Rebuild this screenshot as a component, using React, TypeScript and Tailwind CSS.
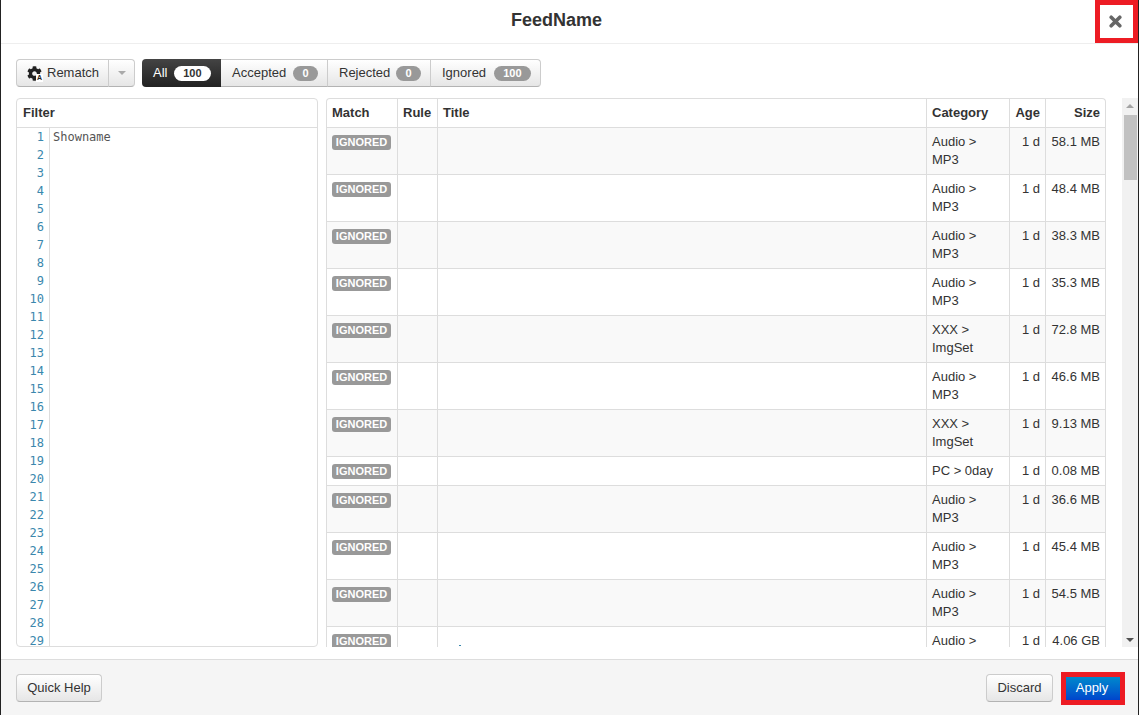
import { FaCog } from 'react-icons/fa';

type Row = { cat: string[]; size: string };

const rows: Row[] = [
  { cat: ['Audio >', 'MP3'], size: '58.1 MB' },
  { cat: ['Audio >', 'MP3'], size: '48.4 MB' },
  { cat: ['Audio >', 'MP3'], size: '38.3 MB' },
  { cat: ['Audio >', 'MP3'], size: '35.3 MB' },
  { cat: ['XXX >', 'ImgSet'], size: '72.8 MB' },
  { cat: ['Audio >', 'MP3'], size: '46.6 MB' },
  { cat: ['XXX >', 'ImgSet'], size: '9.13 MB' },
  { cat: ['PC > 0day'], size: '0.08 MB' },
  { cat: ['Audio >', 'MP3'], size: '36.6 MB' },
  { cat: ['Audio >', 'MP3'], size: '45.4 MB' },
  { cat: ['Audio >', 'MP3'], size: '54.5 MB' },
  { cat: ['Audio >', 'MP3'], size: '4.06 GB' },
];

const lineNumbers = Array.from({ length: 29 }, (_, i) => i + 1);

const btn =
  'bg-linear-to-b from-white to-[#e6e6e6] border border-[#cccccc] border-b-[#b3b3b3] text-[#333333]';

function Count({ value, light }: { value: number; light?: boolean }) {
  return (
    <span
      className={
        'inline-flex h-[15px] items-center rounded-full px-[9.5px] text-[11px] leading-none font-bold ' +
        (light ? 'bg-white text-[#333333]' : 'bg-[#999999] text-white')
      }
    >
      {value}
    </span>
  );
}

function Tab({ label, value, width }: { label: string; value: number; width: string }) {
  return (
    <button className={`${btn} ${width} flex h-[28px] items-center justify-between border-l-0 pr-[9px] pl-[11px] last:rounded-r-[4px]`}>
      {label}
      <Count value={value} />
    </button>
  );
}

export default function App() {
  return (
    <div className="relative flex h-[715px] w-full flex-col overflow-hidden border-x border-[#222222] bg-white font-['Liberation_Sans',Arial,sans-serif] text-[13px] leading-[18px] text-[#333333]">
      {/* Header */}
      <header className="flex h-[44px] shrink-0 items-center justify-center border-b border-[#eeeeee] pr-[26px] pb-[3px]">
        <h1 className="text-[18px] font-bold">FeedName</h1>
      </header>
      <div className="absolute top-0 right-0 flex h-[43px] w-[43px] items-center justify-center border-[5px] border-[#ed1c24] bg-white">
        <svg width="13" height="13" viewBox="0 0 13 13" className="mr-[2px] text-[#666666]">
          <path d="M2.2 2.2 L10.8 10.8 M10.8 2.2 L2.2 10.8" stroke="currentColor" strokeWidth="3.6" strokeLinecap="round" />
        </svg>
      </div>

      {/* Toolbar */}
      <div className="mt-[15px] flex h-[28px] shrink-0 gap-[7px] pl-[15px]">
        <div className="flex">
          <button className={`${btn} flex h-[28px] w-[93px] items-center gap-[5px] rounded-l-[4px] pl-[10px]`}>
            <span className="relative h-[15px] w-[15px] text-[#222222]">
              <FaCog size={15} />
              <span className="absolute -right-px -bottom-px bg-white px-px text-[7px] leading-[8px] font-bold">A</span>
            </span>
            Rematch
          </button>
          <button className={`${btn} -ml-px flex h-[28px] w-[27px] items-center justify-center rounded-r-[4px]`}>
            <span className="h-0 w-0 border-x-[4px] border-t-[4px] border-x-transparent border-t-[#aaaaaa]" />
          </button>
        </div>
        <div className="flex">
          <button className="flex h-[28px] w-[79px] items-center justify-between rounded-l-[4px] bg-linear-to-b from-[#444444] to-[#222222] pr-[10px] pl-[11px] text-white">
            All
            <Count value={100} light />
          </button>
          <Tab label="Accepted" value={0} width="w-[107px]" />
          <Tab label="Rejected" value={0} width="w-[103px]" />
          <Tab label="Ignored" value={100} width="w-[110px]" />
        </div>
      </div>

      {/* Body */}
      <div className="mt-[11px] flex h-[549px] shrink-0 pl-[15px]">
        <section className="flex w-[302px] flex-col overflow-hidden rounded-[4px] border border-[#dddddd]">
          <div className="h-[29px] shrink-0 border-b border-[#dddddd] pt-[5px] pl-[6px] font-bold">Filter</div>
          <div className="flex flex-1 overflow-hidden font-['DejaVu_Sans_Mono',monospace] text-[12px]">
            <div className="h-fit w-[33px] shrink-0 border-r border-[#dddddd] pr-[5px] text-right text-[#3a87ad]">
              {lineNumbers.map((n) => (
                <div key={n} className="h-[18px]">
                  {n}
                </div>
              ))}
            </div>
            <div className="pl-[3px] text-[#555555]">Showname</div>
          </div>
        </section>

        <section className="ml-[8px] w-[780px] overflow-hidden rounded-t-[4px] border-x border-t border-[#dddddd]">
          <table className="w-[778px] table-fixed border-separate border-spacing-0">
            <colgroup>
              <col className="w-[70px]" />
              <col className="w-[40px]" />
              <col className="w-[489px]" />
              <col className="w-[83px]" />
              <col className="w-[36px]" />
              <col className="w-[60px]" />
            </colgroup>
            <thead>
              <tr className="text-left font-bold">
                <th className="h-[28px] pt-[5px] pb-[5px] pl-[5px] align-top">Match</th>
                <th className="border-l border-[#dddddd] pt-[5px] pl-[5px] align-top">Rule</th>
                <th className="border-l border-[#dddddd] pt-[5px] pl-[5px] align-top">Title</th>
                <th className="border-l border-[#dddddd] pt-[5px] pl-[5px] align-top">Category</th>
                <th className="border-l border-[#dddddd] pt-[5px] pr-[5px] text-right align-top">Age</th>
                <th className="border-l border-[#dddddd] pt-[5px] pr-[5px] text-right align-top">Size</th>
              </tr>
            </thead>
            <tbody>
              {rows.map((r, i) => (
                <tr key={i} className={i % 2 === 0 ? 'bg-[#f9f9f9]' : 'bg-white'}>
                  <td className="border-t border-[#dddddd] pt-[4px] pb-[6px] pl-[5px] align-top">
                    <span className="mt-[3px] flex h-[15px] w-[59px] items-center justify-center rounded-[3px] bg-[#999999] text-[11px] leading-none font-bold text-white">
                      IGNORED
                    </span>
                  </td>
                  <td className="border-t border-l border-[#dddddd]" />
                  <td className="border-t border-l border-[#dddddd] align-top">
                    {i === 11 && <div className="mt-[18px] ml-[21px] h-px w-[2px] bg-[#3a87ad]" />}
                  </td>
                  <td className="border-t border-l border-[#dddddd] pt-[5px] pb-[5px] pl-[5px] align-top">
                    {r.cat.map((c) => (
                      <div key={c}>{c}</div>
                    ))}
                  </td>
                  <td className="border-t border-l border-[#dddddd] pt-[5px] pr-[5px] text-right align-top">1 d</td>
                  <td className="border-t border-l border-[#dddddd] pt-[5px] pr-[5px] text-right align-top">{r.size}</td>
                </tr>
              ))}
            </tbody>
          </table>
        </section>

        {/* Scrollbar */}
        <div className="ml-auto flex w-[16px] flex-col items-center bg-[#f1f1f1]">
          <span className="mt-[6px] h-0 w-0 border-x-[4px] border-b-[4px] border-x-transparent border-b-[#a3a3a3]" />
          <div className="mt-[7px] h-[65px] w-[13px] bg-[#c1c1c1]" />
          <span className="mt-auto mb-[5px] h-0 w-0 border-x-[4px] border-t-[4px] border-x-transparent border-t-[#505050]" />
        </div>
      </div>

      {/* Footer */}
      <footer className="mt-[12px] flex flex-1 justify-between border-t border-[#dddddd] bg-[#f5f5f5] pt-[14px] pr-[13px] pl-[15px]">
        <button className={`${btn} h-[28px] w-[86px] rounded-[4px] pb-px`}>Quick Help</button>
        <div className="flex items-start gap-[8px]">
          <button className={`${btn} h-[28px] w-[67px] rounded-[4px] pb-px`}>Discard</button>
          <div className="-mt-[2px] border-[5px] border-[#ed1c24]">
            <button className="block h-[23px] w-[54px] bg-linear-to-b from-[#0088cc] to-[#0044cc] pr-[2px] pb-[2px] text-white">Apply</button>
          </div>
        </div>
      </footer>
    </div>
  );
}
